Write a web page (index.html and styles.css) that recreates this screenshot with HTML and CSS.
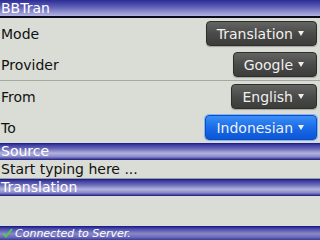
FILE: index.html
```html
<!DOCTYPE html>
<html lang="en">
<head>
  <meta charset="UTF-8" />
  <title>BBTran</title>
  <link rel="stylesheet" href="styles.css">
</head>
<body>
  <div class="screen">
    <div class="title-bar">BBTran</div>

    <div class="row">
      <span class="label">Mode</span>
      <span class="choice">Translation <i class="arrow"></i></span>
    </div>
    <div class="row">
      <span class="label">Provider</span>
      <span class="choice">Google <i class="arrow"></i></span>
    </div>
    <div class="separator"></div>
    <div class="row">
      <span class="label">From</span>
      <span class="choice">English <i class="arrow"></i></span>
    </div>
    <div class="row">
      <span class="label">To</span>
      <span class="choice focused">Indonesian <i class="arrow"></i></span>
    </div>

    <div class="section-bar">Source</div>
    <div class="source-input">Start typing here ...</div>
    <div class="section-bar">Translation</div>
    <div class="output"></div>

    <div class="status-bar">
      <svg class="check" width="11" height="10" viewBox="0 0 11 10">
        <path d="M1 5.5 L4 8.5 L10 1" fill="none" stroke="#52c84e" stroke-width="2"/>
      </svg>
      <span>Connected to Server.</span>
    </div>
  </div>
</body>
</html>
```

FILE: styles.css
```css
body {
  margin: 0;
  background-color: #d9ddd6;
  font-family: "DejaVu Sans", Verdana, sans-serif;
  color: #111;
}

.screen {
  display: flex;
  flex-direction: column;
  width: 320px;
  height: 240px;
  overflow: hidden;
}

.title-bar {
  height: 16px;
  line-height: 16px;
  padding-left: 1px;
  font-size: 14px;
  color: #fff;
  background: linear-gradient(#2c2c96, #5a5ab4 40%, #b4b4e2 100%);
  border-bottom: 2px solid #0a0a1a;
}

.row {
  display: flex;
  align-items: center;
  justify-content: space-between;
  height: 31px;
  padding: 0 3px 0 1px;
  font-size: 14px;
}

.separator {
  height: 1px;
  background-color: #a4a8a0;
}

.choice {
  display: flex;
  align-items: center;
  gap: 5px;
  height: 23px;
  padding: 0 12px 0 10px;
  border: 1px solid #2e2e2c;
  border-radius: 4px;
  color: #f0f0f0;
  background: linear-gradient(#646462, #4a4a48 50%, #3c3c3a);
  box-shadow: 0 1px 1px rgba(0, 0, 0, 0.25);
}

.choice.focused {
  border-color: #0c4cc4;
  background: linear-gradient(#3c8ef6, #1a6ce8 50%, #0c56d6);
  box-shadow: 0 0 0 1px #86b4ee;
}

.arrow {
  width: 0;
  height: 0;
  border-left: 3px solid transparent;
  border-right: 3px solid transparent;
  border-top: 5px solid #f0f0f0;
}

.section-bar {
  height: 17px;
  line-height: 16px;
  padding-left: 1px;
  font-size: 14px;
  color: #fff;
  box-sizing: border-box;
  background: linear-gradient(#16168a, #3e3ea2 12%, #6c6cba 35%, #b2b2de 60%, #8c8cc8 80%, #4646a6 93%, #12127e);
}

.source-input {
  height: 18px;
  line-height: 18px;
  padding-left: 1px;
  font-size: 14px;
  border-bottom: 1px solid #9c9f96;
}

.output {
  flex: 1;
}

.status-bar {
  display: flex;
  align-items: center;
  gap: 2px;
  height: 14px;
  padding-left: 2px;
  font-size: 11px;
  font-style: italic;
  color: #fff;
  background: linear-gradient(#14148a, #4a4aa8 20%, #8888c8 55%, #6a6ab8 80%, #3a3a9c);
}
```
